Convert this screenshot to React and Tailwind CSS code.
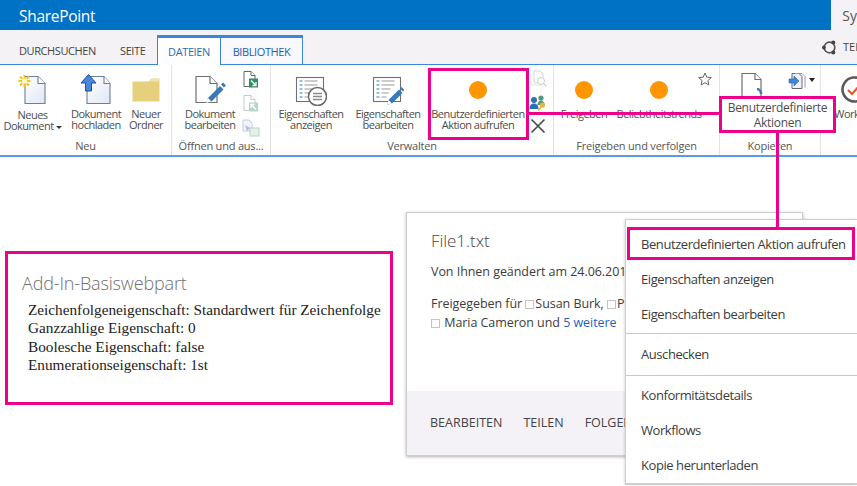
const SEGOE = "font-['Open_Sans',sans-serif]";

const IconNew = () => (
  <svg width="32" height="32" viewBox="0 0 32 32">
    <defs>
      <linearGradient id="pg" x1="0" y1="0" x2="1" y2="1"><stop offset="0" stopColor="#ffffff" /><stop offset="1" stopColor="#dfe6f4" /></linearGradient>
    </defs>
    <path d="M8 2.500h13l7 7v20H8z" fill="url(#pg)" stroke="#6d7f9d" strokeWidth="1.100" />
    <path d="M21 2.500v7h7" fill="#fff" stroke="#6d7f9d" strokeWidth="1.100" />
    <g stroke="#f4c51f" strokeWidth="2">
      <path d="M7.500 1v12M1.500 7h12M3 2.500l9 9M12 2.500l-9 9" />
    </g>
    <rect x="5" y="4.500" width="5" height="5" fill="#fff6c8" />
  </svg>
);

const IconUpload = () => (
  <svg width="32" height="32" viewBox="0 0 32 32">
    <path d="M7 2.500h17l6 7v20H7z" fill="url(#pg)" stroke="#6d7f9d" strokeWidth="1.100" />
    <path d="M24 2.500v7h6" fill="#fff" stroke="#6d7f9d" strokeWidth="1.100" />
    <path d="M8.500 0.500L16 9h-4.500v8h-6V9H1z" fill="#4a86d8" stroke="#1f4fa8" strokeWidth="1" />
  </svg>
);

const IconFolder = () => (
  <svg width="28" height="26" viewBox="0 0 28 26">
    <path d="M0.500 4.500h16l3-3h8v23h-27z" fill="#e6cf7d" />
    <path d="M17 4.500l2.500-2.500h7.500v2.500z" fill="#f2e4ae" />
  </svg>
);

const IconEdit = () => (
  <svg width="32" height="32" viewBox="0 0 32 32">
    <path d="M2 2.500h14l7 7v19H2z" fill="#fff" stroke="#707070" strokeWidth="1.200" />
    <path d="M16 2.500v7h7" fill="#fff" stroke="#707070" strokeWidth="1.200" />
    <path d="M12 29l2-5 12-12 3.500 3.500-12 12z" fill="#3a78b8" />
    <path d="M27 10.500l2-2 3 3-2 2z" fill="#3a78b8" />
    <path d="M12 29l2-5 3.500 3.500z" fill="#ffffff" />
  </svg>
);

const ListLines = () => (
  <g>
    <path d="M4.500 7h3M4.500 11h3M4.500 15h3M4.500 19h3M4.500 23h3" stroke="#2f7cc7" strokeWidth="1.200" />
    <path d="M9.500 7h13M9.500 11h13M9.500 15h9M9.500 19h7M9.500 23h5" stroke="#9a9a9a" strokeWidth="1.200" />
  </g>
);

const IconPropsView = () => (
  <svg width="32" height="32" viewBox="0 0 32 32">
    <rect x="1.500" y="3.500" width="27" height="24" fill="#fff" stroke="#707070" strokeWidth="1.100" />
    <ListLines />
    <circle cx="22.500" cy="22.500" r="9" fill="#fff" stroke="#6a6a6a" strokeWidth="1.500" />
    <path d="M18 19.500h9M18 22.500h9M18 25.500h9" stroke="#8a8a8a" strokeWidth="1.300" />
  </svg>
);

const IconPropsEdit = () => (
  <svg width="32" height="32" viewBox="0 0 32 32">
    <rect x="1.500" y="3.500" width="27" height="24" fill="#fff" stroke="#707070" strokeWidth="1.100" />
    <ListLines />
    <path d="M15 31l1.500-5L27 15.500l3.500 3.500L20 29.500z" fill="#3a78b8" />
    <path d="M28 14.500l1.500-1.500 3 3-1.500 1.500z" fill="#3a78b8" />
    <path d="M15 31l1.500-5 3.500 3.500z" fill="#fff" />
  </svg>
);

const Dot = () => <span className="block w-[18px] h-[18px] rounded-full bg-[#ff9500]" />;

const SmallDocGreen = ({ faded }) => (
  <svg width="16" height="17" viewBox="0 0 16 17" opacity={faded ? 0.35 : 1}>
    <path d="M1 .5h7l4 4v11H1z" fill="#fff" stroke="#666" />
    <path d="M8 .5v4h4" fill="#fff" stroke="#666" />
    <rect x="6" y="7.500" width="9" height="9" fill="#2f8f63" />
    <path d={faded ? "M13 14.500l-5-5M8 13V9.500h3.500" : "M8 9.500l5 5M13 11v3.500H9.500"} stroke="#fff" strokeWidth="1.300" fill="none" />
  </svg>
);

const SmallCopies = () => (
  <svg width="18" height="18" viewBox="0 0 18 18" opacity="0.55">
    <path d="M1 1h6l3 3v8H1z" fill="#e6e8f6" stroke="#9aa0c0" />
    <path d="M3 6l5 3-3 3z" fill="#5a8ad6" />
    <rect x="8" y="9" width="9" height="8" fill="#cfe6d4" stroke="#7ab58c" />
  </svg>
);

const SmallFind = () => (
  <svg width="18" height="18" viewBox="0 0 18 18" opacity="0.4">
    <path d="M5 1h6l3 3v9H5z" fill="#fff" stroke="#999" />
    <path d="M2 4v11h9" fill="none" stroke="#d8b98a" />
    <circle cx="12" cy="11" r="3.500" fill="#fff" stroke="#888" />
    <path d="M14.500 13.500l3 3" stroke="#888" strokeWidth="1.300" />
  </svg>
);

const SmallPeople = () => (
  <svg width="18" height="18" viewBox="0 0 18 18">
    <circle cx="5" cy="6" r="3" fill="#2f6fb5" />
    <path d="M0.500 15c0-4 2-5.500 4.500-5.500s4.500 1.500 4.500 5.500z" fill="#2f6fb5" />
    <circle cx="12" cy="4" r="2.600" fill="#4f9a7a" />
    <path d="M8.500 11c0-3 1.500-4.500 3.500-4.500s3.500 1.500 3.500 4.500z" fill="#4f9a7a" />
    <circle cx="13.500" cy="11" r="2.600" fill="#e8b33f" />
    <path d="M12 13l-3 3.500" stroke="#e8b33f" strokeWidth="1.800" />
  </svg>
);

const SmallX = () => (
  <svg width="16" height="16" viewBox="0 0 16 16">
    <path d="M1.500 1.500l13 13M14.500 1.500l-13 13" stroke="#4a4a4a" strokeWidth="1.700" />
  </svg>
);

const Star = () => (
  <svg width="14" height="14" viewBox="0 0 14 14">
    <path d="M7 1l1.800 4.200 4.500.4-3.400 3 1 4.400L7 10.700 3.100 13l1-4.400-3.400-3 4.500-.4z" fill="none" stroke="#666" strokeWidth="1" />
  </svg>
);

const IconCopyDoc = () => (
  <svg width="22" height="24" viewBox="0 0 22 24">
    <path d="M1 24V.5h13l6 6V24" fill="#fff" stroke="#707070" strokeWidth="1.200" />
    <path d="M14 .5v6h6" fill="#fff" stroke="#707070" strokeWidth="1.200" />
    <path d="M16 16c2 0 4 2 4 5" fill="none" stroke="#3a78b8" strokeWidth="2.500" />
  </svg>
);

const SmallMove = () => (
  <span className="flex items-start gap-[3px]">
    <svg width="18" height="16" viewBox="0 0 18 16">
      <path d="M4 .5h7l3 3v12H4z" fill="#eef1fa" stroke="#667" />
      <path d="M7 .5h7l3 3v11" fill="none" stroke="#99a" />
      <path d="M1 6h5V3l5 5-5 5v-3H1z" fill="#3f86d6" stroke="#2a62ad" strokeWidth=".6" />
    </svg>
    <span className="mt-[5px] w-0 h-0 border-x-[3px] border-x-transparent border-t-[4px] border-t-[#222]" />
  </span>
);

const IconWorkflow = () => (
  <svg width="32" height="30" viewBox="0 0 32 30">
    <path d="M24 6a12 12 0 1 0 3.500 9" fill="none" stroke="#5a5a5a" strokeWidth="2.600" />
    <path d="M18 5.500l7-4 1 7z" fill="#5a5a5a" />
    <path d="M9 15l4 4 8-9" fill="none" stroke="#e4572e" strokeWidth="2.200" />
  </svg>
);

const Btn = ({ w, icon, lines, arrow, down }) => (
  <div className="flex flex-col items-center shrink-0" style={{ width: w }}>
    <div className="h-[36px] flex items-center justify-center shrink-0">{icon}</div>
    <div className={`text-[11px] leading-[11px] text-center whitespace-nowrap text-[#4d4d4d] tracking-[-0.5px] ${down ? "mt-[1px]" : ""}`}>
      {lines.map((l, i) => (
        <div key={i}>
          {l}
          {arrow && i === lines.length - 1 && (
            <span className="inline-block ml-[2px] mb-[1px] w-0 h-0 border-x-[3px] border-x-transparent border-t-[3px] border-t-[#333]" />
          )}
        </div>
      ))}
    </div>
  </div>
);

const Group = ({ w, label, children, last }) => (
  <div className={`flex flex-col shrink-0 pt-[4px] ${last ? "" : "border-r border-[#e3e3e3]"}`} style={{ width: w }}>
    <div className="flex flex-1 items-start pt-[3px]">{children}</div>
    <div className="h-[18px] text-[11px] leading-[18px] text-center text-[#555] tracking-[-0.2px]">{label}</div>
  </div>
);

const Square = ({ ml = "" }) => (
  <span className={`inline-block w-[9px] h-[9px] border border-[#c4c4c4] align-[-1px] mr-[1px] ${ml}`} />
);

const MenuItem = ({ children }) => (
  <div className="h-[35px] pl-[15px] flex items-center text-[13px] text-[#3c3c3c] tracking-[-0.43px] whitespace-nowrap">{children}</div>
);

export default function App() {
  return (
    <div className={`relative w-[857px] h-[486px] overflow-hidden bg-white ${SEGOE}`}>
      {/* Suite bar */}
      <div className="flex h-[30px]">
        <div className="w-[832px] bg-[#0072c6] pl-[19px] text-[15.500px] leading-[33px] text-white tracking-[-0.3px]">SharePoint</div>
        <div className="flex-1 bg-[#f4f2f6] pl-[11px] text-[14px] leading-[31px] text-[#555]">Sy</div>
      </div>

      {/* Tabs */}
      <div className="flex h-[35px] bg-[#f5f2f6] border-b border-[#3a86dc] pt-[5px]">
        <div className="pl-[19px] w-[157px] flex text-[11px] leading-[31px] text-[#444] tracking-[-0.4px]">
          <span className="w-[101px]">DURCHSUCHEN</span>
          <span>SEITE</span>
        </div>
        <div className="w-[64px] h-[30px] bg-white border-x border-[#3a86dc] border-t-[3px] text-center text-[11px] leading-[28px] text-[#1f6db5] tracking-[-0.4px]">DATEIEN</div>
        <div className="w-[82px] h-[29px] bg-[#f8f8fd] border-r border-[#3a86dc] border-t-[3px] text-center text-[11px] leading-[28px] text-[#1f5fa8] tracking-[-0.4px]">BIBLIOTHEK</div>
        <div className="ml-auto flex items-center h-[24px] gap-[6px] w-[35px] shrink-0 overflow-hidden">
          <svg width="15" height="15" viewBox="0 0 15 15" className="shrink-0">
            <circle cx="7.500" cy="7.500" r="5.300" fill="none" stroke="#555" strokeWidth="1.700" />
            <circle cx="11.300" cy="2.600" r="2" fill="#444" />
            <circle cx="1.900" cy="7.500" r="1.900" fill="#444" />
            <circle cx="11.300" cy="12.400" r="2" fill="#444" />
          </svg>
          <span className="text-[11px] text-[#444] whitespace-nowrap">TEILEN</span>
        </div>
      </div>

      {/* Ribbon */}
      <div className="flex h-[92px] border-b-2 border-[#5b9be6] overflow-hidden">
        <Group w={172} label="Neu">
          <Btn w={65} icon={<IconNew />} lines={["Neues", "Dokument"]} arrow down />
          <Btn w={62} icon={<IconUpload />} lines={["Dokument", "hochladen"]} />
          <Btn w={38} icon={<IconFolder />} lines={["Neuer", "Ordner"]} />
        </Group>
        <Group w={99} label="Öffnen und aus...">
          <div className="w-[9px] shrink-0" />
          <Btn w={58} icon={<IconEdit />} lines={["Dokument", "bearbeiten"]} />
          <div className="w-[22px] ml-[1px] flex flex-col items-center gap-[7px] mt-[-1px]">
            <SmallDocGreen />
            <SmallDocGreen faded />
            <SmallCopies />
          </div>
        </Group>
        <Group w={283} label="Verwalten">
          <div className="w-[1px] shrink-0" />
          <Btn w={78} icon={<IconPropsView />} lines={["Eigenschaften", "anzeigen"]} />
          <Btn w={76} icon={<IconPropsEdit />} lines={["Eigenschaften", "bearbeiten"]} />
          <div className="w-[2px] shrink-0" />
          <Btn w={100} icon={<Dot />} lines={["Benutzerdefinierten", "Aktion aufrufen"]} />
          <div className="w-[20px] flex flex-col items-center gap-[6px] mt-[-2px]">
            <SmallFind />
            <SmallPeople />
            <SmallX />
          </div>
        </Group>
        <Group w={166} label="Freigeben und verfolgen">
          <Btn w={60} icon={<Dot />} lines={["Freigeben"]} />
          <div className="w-[5px] shrink-0" />
          <Btn w={80} icon={<Dot />} lines={["Beliebtheitstrends"]} />
          <div className="ml-[-1px]"><Star /></div>
        </Group>
        <Group w={101} label="Kopieren">
          <div className="w-[21px] shrink-0" />
          <div className="w-[24px] mt-[1px] shrink-0"><IconCopyDoc /></div>
          <div className="ml-[23px] mt-[1px]"><SmallMove /></div>
        </Group>
        <Group w={36} label="" last>
          <Btn w={76} icon={<span className="block mr-[8px]"><IconWorkflow /></span>} lines={["Workflows"]} />
        </Group>
      </div>

      {/* Page body */}
      <div className="flex items-start">
        <div className="mt-[94px] ml-[5px] w-[388px] h-[154px] border-[3px] border-[#ec008c] pl-[14px] pt-[17px] bg-white">
          <div className="text-[18px] leading-[24px] font-light text-[#6f6f6f] tracking-[-0.15px]">Add-In-Basiswebpart</div>
          <div className="pl-[6px] mt-[6px] font-['Liberation_Serif',serif] text-[15.260px] leading-[18.300px] text-[#222] whitespace-nowrap">
            <div>Zeichenfolgeneigenschaft: Standardwert für Zeichenfolge</div>
            <div>Ganzzahlige Eigenschaft: 0</div>
            <div>Boolesche Eigenschaft: false</div>
            <div>Enumerationseigenschaft: 1st</div>
          </div>
        </div>

        <div className="relative mt-[55px] ml-[13px] w-[397px] h-[244px] border border-[#cfcfcf] shadow-[0_1px_3px_rgba(0,0,0,0.3)] bg-white flex flex-col">
          <div className="flex-1 pl-[24px] pt-[16px] text-[12.500px] text-[#3c3c3c] tracking-[-0.05px] whitespace-nowrap overflow-hidden">
            <div className="text-[17px] leading-[24px] text-[#444] font-light">File1.txt</div>
            <div className="mt-[9px] leading-[20px]">Von Ihnen geändert am 24.06.2015</div>
            <div className="mt-[12px] leading-[19px]">
              Freigegeben für <Square />Susan Burk, <Square />Pat Coleman,
            </div>
            <div className="leading-[20px]">
              <Square ml="mr-[1px]" /> Maria Cameron und <span className="text-[#1f5fc0]">5 weitere</span>
            </div>
          </div>
          <div className="h-[64px] bg-[#f4f2f6] pl-[23px] flex items-center gap-[21px] text-[12.500px] text-[#444]">
            <span>BEARBEITEN</span>
            <span>TEILEN</span>
            <span>FOLGEN</span>
          </div>

          {/* Context menu */}
          <div className="absolute left-[218px] top-[6px] w-[232px] h-[266px] bg-white border-l border-t border-[#cfcfcf] border-b-2 pt-[7px] shadow-[-1px_0_2px_rgba(0,0,0,0.12)]">
            <MenuItem>Benutzerdefinierten Aktion aufrufen</MenuItem>
            <MenuItem>Eigenschaften anzeigen</MenuItem>
            <MenuItem>Eigenschaften bearbeiten</MenuItem>
            <div className="h-[1px] mt-[1px] bg-[#c8c8c8]" />
            <div className="py-[3px]"><MenuItem>Auschecken</MenuItem></div>
            <div className="h-[1px] bg-[#c8c8c8]" />
            <div className="pt-[2px]">
              <MenuItem>Konformitätsdetails</MenuItem>
              <MenuItem>Workflows</MenuItem>
              <MenuItem>Kopie herunterladen</MenuItem>
            </div>
          </div>
        </div>
      </div>

      {/* Annotation overlays */}
      <div className="absolute left-[428px] top-[68px] w-[101px] h-[72px] border-[3px] border-[#ec008c]" />
      <div className="absolute left-[529px] top-[112px] w-[191px] h-[3px] bg-[#ec008c]" />
      <div className="absolute left-[719px] top-[96px] w-[117px] h-[37px] border-[3px] border-[#ec008c] bg-white flex flex-col items-center justify-center text-[12px] leading-[15px] text-[#4d4d4d] tracking-[-0.3px]">
        <div>Benutzerdefinierte</div>
        <div>Aktionen</div>
      </div>
      <div className="absolute left-[776px] top-[133px] w-[3px] h-[95px] bg-[#ec008c]" />
      <div className="absolute left-[627px] top-[227px] w-[228px] h-[33px] border-[3px] border-[#ec008c]" />
    </div>
  );
}
